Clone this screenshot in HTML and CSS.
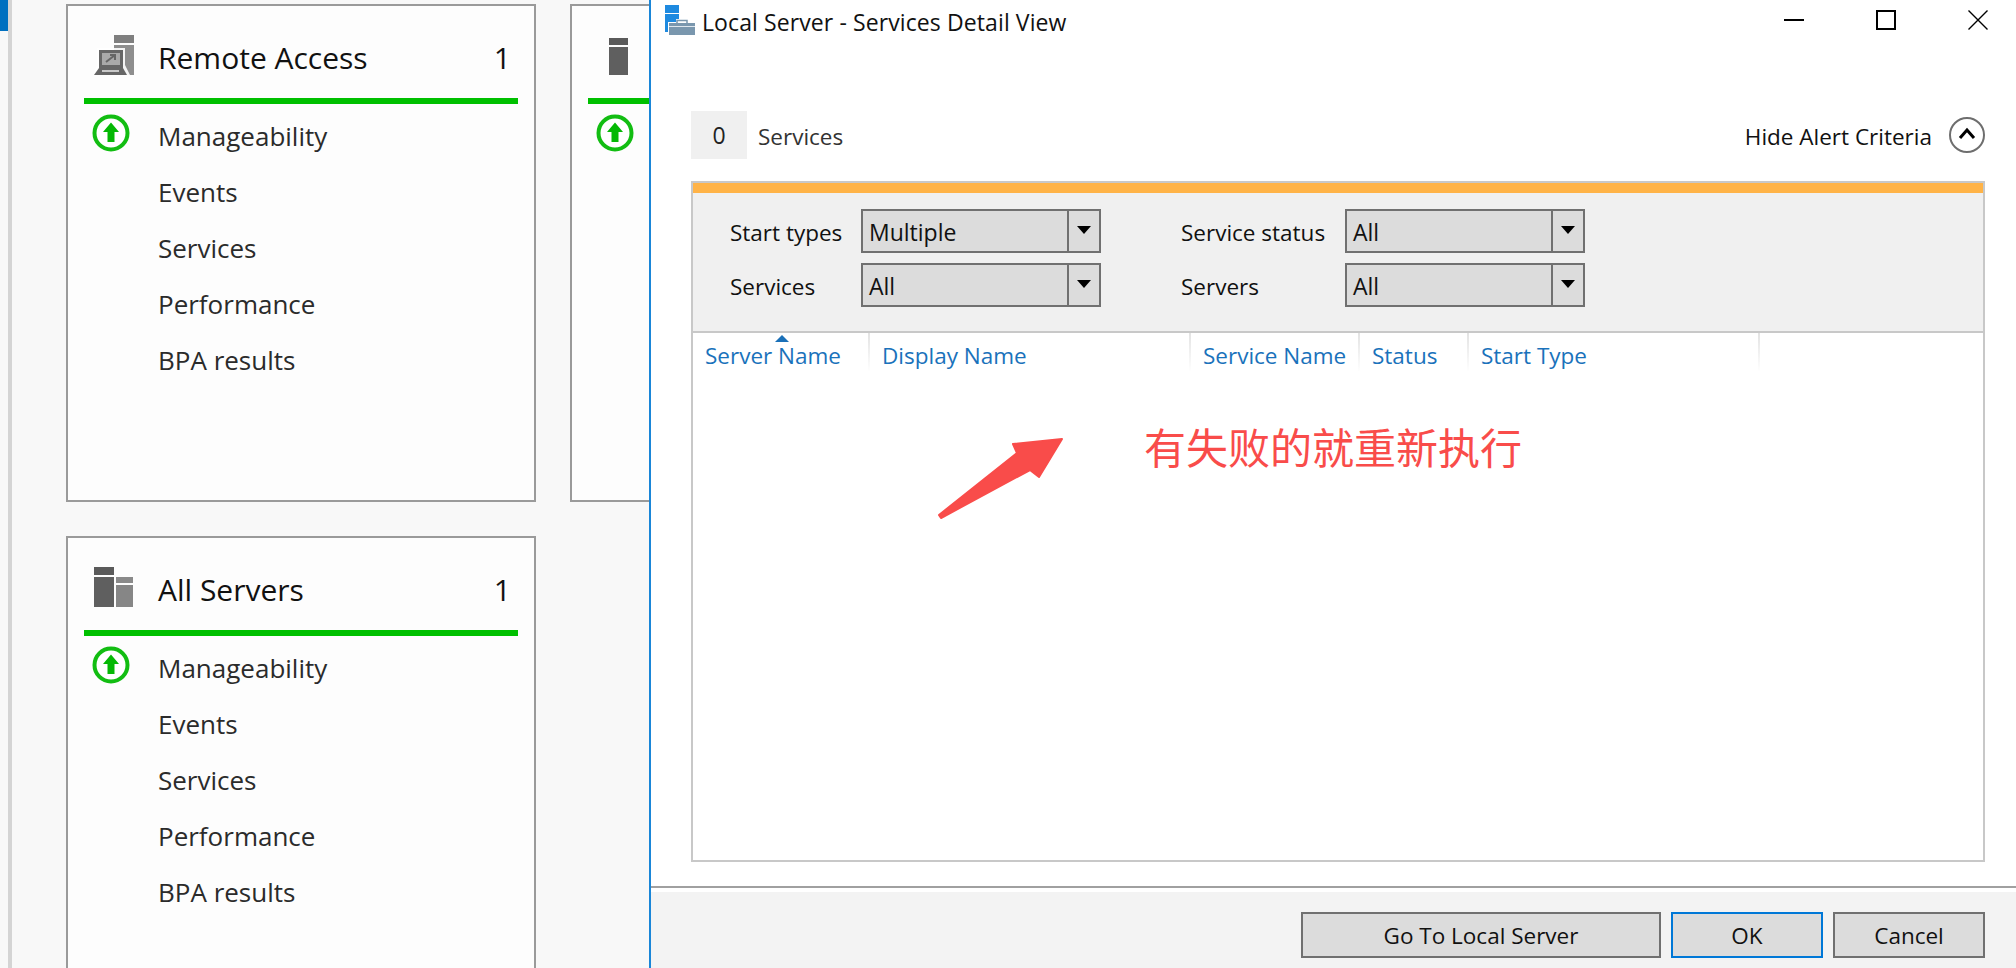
FILE: index.html
```html
<!DOCTYPE html>
<html lang="en">
<head>
    <meta charset="UTF-8">
    <meta name="viewport" content="width=device-width, initial-scale=1.0">
    <title>Local Server - Services Detail View</title>
    <link rel="stylesheet" href="styles.css">
</head>
<body>
    <svg class="defs" width="0" height="0">
        <symbol id="status-up" viewBox="0 0 38 38">
            <circle cx="19" cy="19" r="16.5" fill="#fff" stroke="#12bd12" stroke-width="4"/>
            <path d="M19 8.5 L27 18 H22.5 V28 H15.5 V18 H11 Z" fill="#04b804"/>
        </symbol>
    </svg>

    <div class="desktop">
        <div class="side"><div class="side-active"></div></div>

        <div class="cards">
            <section class="card">
                <header class="card-head">
                    <svg class="card-icon" width="40" height="40" viewBox="0 0 40 40">
                        <rect x="20" y="0" width="20" height="8" fill="#7f7f7f"/>
                        <rect x="20" y="10" width="20" height="30" fill="#8e8e8e"/>
                        <path d="M3 13 H31 V30 L36 40 H-1 L3 30 Z" fill="#fff" opacity="0.9"/>
                        <rect x="5" y="15" width="24" height="18" fill="#666"/>
                        <rect x="8" y="18" width="18" height="12" fill="#a9a9a9"/>
                        <path d="M12 27 L21 20 M16 20 H21 V25" stroke="#666" stroke-width="2" fill="none"/>
                        <path d="M5 33 H29 L33 40 H0 Z" fill="#666"/>
                        <rect x="8" y="35" width="17" height="2" fill="#c8c8c8"/>
                    </svg>
                    <h2 class="card-title">Remote Access</h2>
                    <span class="card-count">1</span>
                </header>
                <ul class="card-list">
                    <li class="card-row"><svg class="status"><use href="#status-up"/></svg>Manageability</li>
                    <li class="card-row">Events</li>
                    <li class="card-row">Services</li>
                    <li class="card-row">Performance</li>
                    <li class="card-row">BPA results</li>
                </ul>
            </section>

            <section class="card">
                <header class="card-head">
                    <svg class="card-icon" width="40" height="40" viewBox="0 0 40 40">
                        <rect x="11" y="3" width="19" height="7" fill="#5a5a5a"/>
                        <rect x="11" y="12" width="19" height="28" fill="#5f5f5f"/>
                    </svg>
                </header>
                <ul class="card-list">
                    <li class="card-row"><svg class="status"><use href="#status-up"/></svg></li>
                </ul>
            </section>

            <section class="card">
                <header class="card-head">
                    <svg class="card-icon" width="40" height="40" viewBox="0 0 40 40">
                        <rect x="0" y="0" width="20" height="8" fill="#5a5a5a"/>
                        <rect x="0" y="10" width="20" height="30" fill="#5f5f5f"/>
                        <rect x="22" y="10" width="17" height="6" fill="#8a8a8a"/>
                        <rect x="22" y="18" width="17" height="22" fill="#868686"/>
                    </svg>
                    <h2 class="card-title">All Servers</h2>
                    <span class="card-count">1</span>
                </header>
                <ul class="card-list">
                    <li class="card-row"><svg class="status"><use href="#status-up"/></svg>Manageability</li>
                    <li class="card-row">Events</li>
                    <li class="card-row">Services</li>
                    <li class="card-row">Performance</li>
                    <li class="card-row">BPA results</li>
                </ul>
            </section>
        </div>

        <div class="dialog">
            <div class="titlebar">
                <svg class="title-icon" width="30" height="30" viewBox="0 0 30 30">
                    <rect x="0" y="0" width="14" height="8" fill="#1e8ae0"/>
                    <rect x="0" y="9" width="14" height="18" fill="#1e8ae0"/>
                    <path d="M3 17 H11 V14 H23 V17 H30 V30 H3 Z" fill="#fff"/>
                    <rect x="4" y="18" width="26" height="12" fill="#7a97ae"/>
                    <path d="M12 18 V15.5 H22 V18" fill="none" stroke="#7a97ae" stroke-width="1.5"/>
                    <path d="M4 21.5 H30" stroke="#dfe7ee" stroke-width="1"/>
                </svg>
                <span class="title-text">Local Server - Services Detail View</span>
                <div class="win-controls">
                    <svg width="20" height="20" viewBox="0 0 20 20"><path d="M0 10 H20" stroke="#000" stroke-width="2"/></svg>
                    <svg width="20" height="20" viewBox="0 0 20 20"><rect x="1" y="1" width="18" height="18" fill="none" stroke="#000" stroke-width="2"/></svg>
                    <svg width="20" height="20" viewBox="0 0 20 20"><path d="M0.5 0.5 L19.5 19.5 M19.5 0.5 L0.5 19.5" stroke="#000" stroke-width="1.4"/></svg>
                </div>
            </div>

            <div class="summary">
                <span class="summary-count">0</span>
                <span class="summary-label">Services</span>
                <span class="hide-criteria">Hide Alert Criteria</span>
                <svg class="collapse" width="36" height="36" viewBox="0 0 36 36">
                    <circle cx="18" cy="18" r="17" fill="none" stroke="#6e6e6e" stroke-width="2"/>
                    <path d="M11 21 L18 13 L25 21" fill="none" stroke="#000" stroke-width="3"/>
                </svg>
            </div>

            <div class="panel">
                <div class="panel-stripe"></div>
                <div class="filters">
                    <div class="filter-col">
                        <label class="filter-label">Start types</label>
                        <div class="combo"><span class="combo-value">Multiple</span><span class="combo-btn"></span></div>
                        <label class="filter-label">Services</label>
                        <div class="combo"><span class="combo-value">All</span><span class="combo-btn"></span></div>
                    </div>
                    <div class="filter-col filter-col-wide">
                        <label class="filter-label">Service status</label>
                        <div class="combo"><span class="combo-value">All</span><span class="combo-btn"></span></div>
                        <label class="filter-label">Servers</label>
                        <div class="combo"><span class="combo-value">All</span><span class="combo-btn"></span></div>
                    </div>
                </div>
                <div class="grid-head">
                    <div class="col col-server">Server Name<span class="sort-arrow"></span></div>
                    <div class="col col-display">Display Name</div>
                    <div class="col col-service">Service Name</div>
                    <div class="col col-status">Status</div>
                    <div class="col col-start">Start Type</div>
                </div>
                <div class="note">
                    <svg class="note-arrow" width="130" height="90" viewBox="0 0 130 90">
                        <path d="M1 79 L79 17 L75 8 L124 3 L101 41 L92 34 L3 82 Z" fill="#f94c4a" stroke="#f94c4a" stroke-width="2" stroke-linejoin="round"/>
                    </svg>
                    <span class="note-text">有失败的就重新执行</span>
                </div>
            </div>

            <div class="footer">
                <div class="footer-bar">
                    <button class="btn btn-wide">Go To Local Server</button>
                    <button class="btn btn-ok">OK</button>
                    <button class="btn btn-cancel">Cancel</button>
                </div>
            </div>
        </div>
    </div>
</body>
</html>
```

FILE: styles.css
```css
* {
    box-sizing: border-box;
}
body {
    margin: 0;
    font-family: "Open Sans", "Noto Sans", sans-serif;
    color: #222;
}
.defs {
    display: block;
    height: 0;
}
.desktop {
    position: relative;
    display: flex;
    width: 2016px;
    height: 968px;
    overflow: hidden;
    background-color: #f8f8f8;
}

/* left edge */
.side {
    width: 12px;
    flex: none;
    border-right: 4px solid #d4d4d4;
}
.side-active {
    width: 8px;
    height: 31px;
    background-color: #0070c0;
}

/* dashboard cards */
.cards {
    display: grid;
    grid-template-columns: 470px 470px;
    grid-template-rows: 498px 498px;
    column-gap: 34px;
    row-gap: 34px;
    padding: 4px 0 0 54px;
}
.card {
    background-color: #fdfdfd;
    border: 2px solid #9a9a9a;
    padding: 0 16px;
}
.card-head {
    display: flex;
    align-items: center;
    box-sizing: content-box;
    height: 63px;
    padding: 29px 0 0 10px;
    border-bottom: 6px solid #00c000;
}
.card-icon {
    flex: none;
    align-self: flex-start;
}
.card-title {
    position: relative;
    top: -9px;
    margin: 0 0 0 24px;
    font-size: 30px;
    font-weight: 400;
    color: #111;
}
.card-count {
    position: relative;
    top: -9px;
    margin-left: auto;
    margin-right: 7px;
    font-size: 30px;
    color: #111;
}
.card-list {
    list-style: none;
    margin: 0;
    padding: 5px 0 0 8px;
}
.card-row {
    position: relative;
    display: flex;
    align-items: center;
    height: 56px;
    padding: 0 0 2px 66px;
    font-size: 26px;
    color: #2b2b2b;
}
.status {
    position: absolute;
    left: 0;
    top: 5px;
    width: 38px;
    height: 38px;
}

/* dialog window */
.dialog {
    position: absolute;
    left: 649px;
    top: 0;
    right: 0;
    bottom: 0;
    display: flex;
    flex-direction: column;
    background-color: #fff;
    border-left: 2px solid #1a86d8;
}
.titlebar {
    display: flex;
    align-items: flex-start;
    flex: none;
    height: 44px;
    padding: 5px 28px 0 14px;
}
.title-icon {
    flex: none;
}
.title-text {
    margin-left: 7px;
    font-size: 23px;
    line-height: 34px;
    letter-spacing: 0.1px;
    color: #111;
}
.win-controls {
    display: flex;
    gap: 72px;
    margin-left: auto;
    padding-top: 5px;
}

.summary {
    display: flex;
    align-items: center;
    flex: none;
    height: 48px;
    margin: 67px 31px 22px 40px;
}
.summary-count {
    width: 56px;
    height: 48px;
    line-height: 48px;
    text-align: center;
    font-size: 23px;
    background-color: #f0f0f0;
}
.summary-label {
    margin-left: 11px;
    padding-top: 2px;
    font-size: 22.5px;
    color: #333;
}
.hide-criteria {
    margin-left: auto;
    padding-top: 2px;
    font-size: 22.5px;
    color: #111;
}
.collapse {
    margin-left: 17px;
}

.panel {
    position: relative;
    flex: none;
    height: 681px;
    margin: 0 31px 0 40px;
    border: 2px solid #c8c8c8;
}
.panel-stripe {
    height: 10px;
    background-color: #ffb347;
}
.filters {
    display: flex;
    gap: 80px;
    height: 140px;
    padding: 16px 0 0 37px;
    background-color: #f0f0f0;
    border-bottom: 2px solid #c8c8c8;
}
.filter-col {
    display: grid;
    grid-template-columns: 131px 240px;
    grid-auto-rows: 44px;
    row-gap: 10px;
}
.filter-col-wide {
    grid-template-columns: 164px 240px;
}
.filter-label {
    align-self: center;
    padding-top: 3px;
    font-size: 22.5px;
    color: #111;
}
.combo {
    display: flex;
    background-color: #dcdcdc;
    border: 2px solid #707070;
}
.combo-value {
    flex: 1;
    padding-left: 6px;
    font-size: 23px;
    line-height: 42px;
    color: #111;
}
.combo-btn {
    position: relative;
    flex: none;
    width: 32px;
    border-left: 2px solid #707070;
}
.combo-btn::after {
    content: "";
    position: absolute;
    left: 8px;
    top: 15px;
    border-left: 7px solid transparent;
    border-right: 7px solid transparent;
    border-top: 8px solid #000;
}

.grid-head {
    display: flex;
    height: 38px;
}
.col {
    position: relative;
    padding: 6px 0 0 12px;
    font-size: 22.5px;
    line-height: 34px;
    color: #1a72bb;
    border-right: 2px solid;
    border-image: linear-gradient(#e2e2e2, #fff) 1;
    white-space: nowrap;
}
.col-server { width: 177px; }
.col-display { width: 321px; }
.col-service { width: 169px; }
.col-status { width: 109px; }
.col-start { width: 291px; }
.sort-arrow {
    position: absolute;
    left: 82px;
    top: 2px;
    border-left: 7px solid transparent;
    border-right: 7px solid transparent;
    border-bottom: 7px solid #1a70b8;
}

/* red annotation drawn on top of the empty grid */
.note {
    position: absolute;
    left: 245px;
    top: 252px;
    display: flex;
    align-items: flex-start;
}
.note-arrow {
    flex: none;
    margin-top: 1px;
}
.note-text {
    margin: -13px 0 0 76px;
    font-family: "Noto Sans CJK SC", sans-serif;
    font-size: 42px;
    line-height: 48px;
    color: #f94c4a;
    white-space: nowrap;
}

.footer {
    flex: 1;
    display: flex;
    margin-top: 24px;
    padding-top: 4px;
    border-top: 2px solid #a0a0a0;
}
.footer-bar {
    flex: 1;
    display: flex;
    justify-content: flex-end;
    align-items: flex-start;
    gap: 10px;
    padding: 20px 31px 0 0;
    background-color: #f3f3f3;
}
.btn {
    height: 46px;
    padding: 1px 0 0;
    font-family: inherit;
    font-size: 22.5px;
    color: #111;
    background-color: #dcdcdc;
    border: 2px solid #707070;
}
.btn-wide { width: 360px; }
.btn-ok {
    width: 152px;
    border-color: #0078d7;
}
.btn-cancel { width: 152px; }
```
